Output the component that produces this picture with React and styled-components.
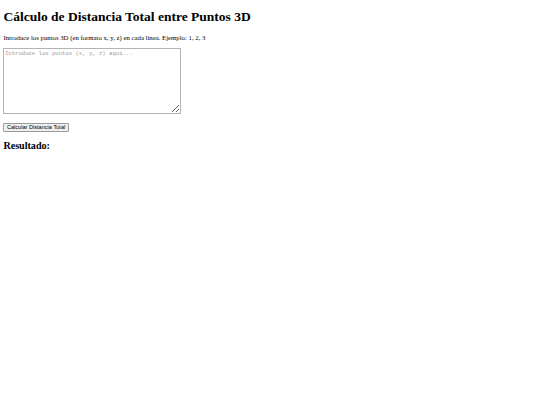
import React, { useState } from 'react';
import styled, { createGlobalStyle } from 'styled-components';

const GlobalStyle = createGlobalStyle`
    body {
        margin: 0 3.4px;
        font-family: "Liberation Serif", "Times New Roman", serif;
        background: #ffffff;
        color: #000000;
    }
`;

const Page = styled.div`
    display: flex;
    flex-direction: column;
    align-items: flex-start;
`;

const Title = styled.h1`
    font-size: 13.5px;
    line-height: 15.5px;
    font-weight: bold;
    margin: 9px 0;
`;

const Hint = styled.p`
    font-size: 6.75px;
    line-height: 7.8px;
    margin: 0 0 6.7px;
`;

const PointsArea = styled.textarea`
    box-sizing: border-box;
    width: 178px;
    height: 66px;
    margin: 0 0 0 -0.4px;
    padding: 1px;
    border: 1px solid #b4b4b4;
    font-family: "Liberation Mono", "DejaVu Sans Mono", monospace;
    font-size: 5.6px;
    resize: vertical;
    &::placeholder {
        color: #9a9a9a;
    }
`;

const CalcButton = styled.button`
    box-sizing: border-box;
    margin: 9.5px 0 0 0;
    padding: 0 2.5px;
    height: 9px;
    font-family: "Liberation Sans", Arial, sans-serif;
    font-size: 5.6px;
    line-height: 7px;
    background: #efefef;
    border: 1px solid #9a9a9a;
    border-radius: 1px;
    color: #000;
`;

const ResultTitle = styled.h2`
    font-size: 10.1px;
    line-height: 11.6px;
    font-weight: bold;
    margin: 7.6px 0;
`;

const parsePoints = (text) =>
    text
        .split('\n')
        .map((l) => l.split(',').map((n) => parseFloat(n)))
        .filter((p) => p.length === 3 && p.every((n) => !Number.isNaN(n)));

const App = () => {
    const [points, setPoints] = useState('');
    const [result, setResult] = useState('');

    const handleCalc = () => {
        const list = parsePoints(points);
        let total = 0;
        for (let i = 1; i < list.length; i++) {
            const [a, b, c] = list[i - 1];
            const [x, y, z] = list[i];
            total += Math.hypot(x - a, y - b, z - c);
        }
        setResult(list.length > 1 ? total.toFixed(2) : '');
    };

    return (
        <Page>
            <GlobalStyle />
            <Title>Cálculo de Distancia Total entre Puntos 3D</Title>
            <Hint>Introduce los puntos 3D (en formato x, y, z) en cada línea. Ejemplo: 1, 2, 3</Hint>
            <PointsArea
                value={points}
                placeholder="Introduce los puntos (x, y, z) aquí..."
                onChange={(e) => setPoints(e.target.value)}
            />
            <CalcButton onClick={handleCalc}>Calcular Distancia Total</CalcButton>
            <ResultTitle>Resultado: {result}</ResultTitle>
        </Page>
    );
};

export default App;
